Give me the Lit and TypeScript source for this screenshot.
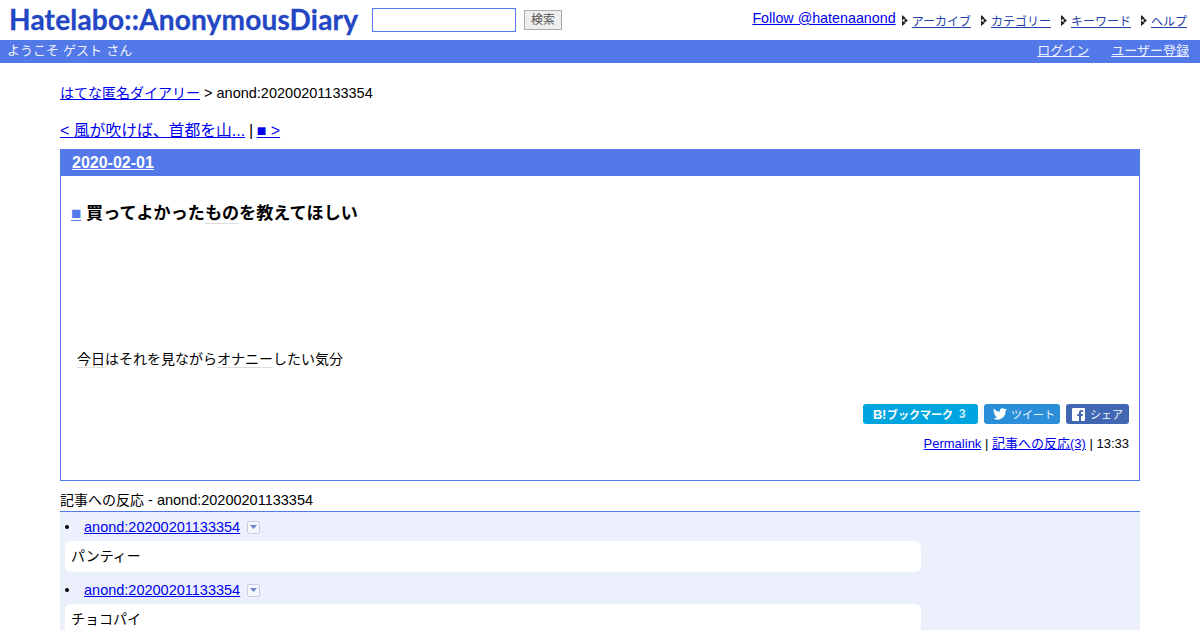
import { LitElement, html, css } from "lit";
import { customElement } from "lit/decorators.js";

const arrow = html`<svg class="arr" width="8" height="11" viewBox="0 0 8 11"><path d="M1 0 L4.500 2.800 L1 5.500Z M1 5.500 L4.500 8.200 L1 11Z M3.500 2.800 L7 5.500 L3.500 8.200Z" fill="#222"/></svg>`;
const caret = html`<span class="caret"><svg width="7" height="4" viewBox="0 0 7 4"><path d="M0 0H7L3.500 4Z" fill="#6f86c8"/></svg></span>`;

@customElement("app-root")
export class AppRoot extends LitElement {
  static styles = css`
    :host { display: block; height: 630px; overflow: hidden; background: #fff; color: #000;
      font-family: "Liberation Sans", "Noto Sans CJK JP", sans-serif; font-size: 14.5px; }
    a { color: #0000ee; }
    .ja { font-size: 14px; }
    .top { height: 40px; display: flex; align-items: flex-start; }
    .logo { margin: 2px 0 0 9px; width: 350px; font-size: 28px; line-height: 34px; font-weight: 700; color: #2346c4; white-space: nowrap; letter-spacing: 0.2px; -webkit-text-stroke: 0.3px #2346c4; font-family: "Lato", "Liberation Sans", sans-serif; }
    .q { box-sizing: border-box; margin: 8px 0 0 13px; width: 144px; height: 24px; border: 1px solid #5279e7; background: #fff; }
    .go { box-sizing: border-box; margin: 10px 0 0 8px; width: 38px; height: 20px; border: 1px solid #aaa; background: #eee; color: #555; font-size: 12px; line-height: 18px; text-align: center; }
    .nav { margin-left: auto; padding: 10px 13px 0 0; display: flex; align-items: center; height: 20px; white-space: nowrap; font-size: 13px; }
    .nav .f { font-size: 14.3px; margin: 0 5px 4px 0; }
    .nav .i { color: #1f40a5; font-size: 12px; margin-right: 9px; margin-left: 3px; }
    .nav .i:last-child { margin-right: 0; }
    .arr { flex: none; }
    .bar { height: 23px; background: #5279e7; color: #f0f3ff; display: flex; justify-content: space-between; padding: 0 11px 0 7px; font-size: 13px; line-height: 22px; word-spacing: 0.5px; }
    .bar a { color: #f0f3ff; margin-left: 22px; }
    main { padding: 0 60px; }
    .crumb { margin-top: 21px; line-height: 18px; }
    .pn { margin-top: 19px; line-height: 20px; font-size: 16px; }
    .pn .ja { font-size: 15.8px; }
    .sep { margin: 0 -1px 0 -0.5px; }
    .box { box-sizing: border-box; margin-top: 8px; height: 332px; border: 1px solid #5279e7; display: flex; flex-direction: column; }
    .date { height: 26px; background: #5279e7; padding-left: 11px; font-size: 16px; font-weight: 700; line-height: 26px; }
    .date a { color: #fff; }
    .h { margin: 27px 0 0 10px; font-size: 17.1px; font-weight: 700; line-height: 21px; }
    .h a { color: #5279e7; }
    .kw { border-bottom: 1px solid #ddd; }
    .text { margin: 125px 0 0 16px; line-height: 20px; font-size: 14px; }
    .share { display: flex; justify-content: flex-end; gap: 6px; margin: 35px 10px 0 0; }
    .btn { height: 20px; border-radius: 3px; color: #eef6fc; display: flex; align-items: center; gap: 4px; font-size: 11px; box-sizing: border-box; white-space: nowrap; }
    .hb { width: 115px; padding-left: 10px; gap: 0; background: #00a4de; color: #fff; font-weight: 700; }
    .hb b { font-size: 13px; width: 14px; letter-spacing: -0.5px; }
    .hb i { font-style: normal; font-weight: 700; font-size: 12px; margin-left: 6px; color: #cdeefa; }
    .tw { width: 76px; padding-left: 9px; background: #2a8fd8; }
    .fb { width: 63px; padding-left: 6px; gap: 5px; background: #4267b2; }
    .meta { margin: 11px 10px 0 0; text-align: right; font-size: 13px; line-height: 18px; }
    .rh { box-sizing: border-box; height: 31px; padding-top: 9px; line-height: 20px; border-bottom: 1px solid #5279e7; }
    .list { background: #ebf0fc; padding: 5px 0 0 5px; }
    .li { display: flex; align-items: center; height: 20px; }
    .dot { width: 4px; height: 4px; border-radius: 50%; background: #000; margin-right: 15px; flex: none; }
    .caret { box-sizing: border-box; width: 13px; height: 13px; border: 1px solid #c5d0e6; border-radius: 2px; background: #f5f7fd; display: inline-flex; align-items: center; justify-content: center; margin-left: 7px; }
    .card { width: 850px; height: 31px; background: #fff; border-radius: 6px; margin: 4px 0 8px; padding-left: 6px; line-height: 31px; font-size: 14px; }
  `;

  render() {
    return html`
      <div class="top">
        <div class="logo">Hatelabo::AnonymousDiary</div>
        <div class="q"></div>
        <div class="go">検索</div>
        <div class="nav">
          <a class="f" href="#">Follow @hatenaanond</a>
          ${arrow}<a class="i" href="#">アーカイブ</a>
          ${arrow}<a class="i" href="#">カテゴリー</a>
          ${arrow}<a class="i" href="#">キーワード</a>
          ${arrow}<a class="i" href="#">ヘルプ</a>
        </div>
      </div>
      <div class="bar">
        <span>ようこそ ゲスト さん</span>
        <span><a href="#">ログイン</a><a href="#">ユーザー登録</a></span>
      </div>
      <main>
        <div class="crumb"><a href="#"><span class="ja">はてな匿名ダイアリー</span></a> &gt; anond:20200201133354</div>
        <div class="pn"><a href="#">&lt; <span class="ja">風が吹けば、首都を山</span>...</a><span class="sep"> | </span><a href="#">■ &gt;</a></div>
        <div class="box">
          <div class="date"><a href="#">2020-02-01</a></div>
          <div class="h"><a href="#">■</a> 買ってよかった<span class="kw">もの</span>を教えてほしい</div>
          <div class="text"><span class="kw">今日</span>はそれを見ながら<span class="kw">オナニー</span>したい気分</div>
          <div class="share">
            <div class="btn hb"><b>B!</b>ブックマーク<i>3</i></div>
            <div class="btn tw"><svg width="14" height="12" viewBox="0 0 24 20"><path fill="#fff" d="M24 2.400a10 10 0 0 1-2.800.8A5 5 0 0 0 23.300.5a10 10 0 0 1-3.100 1.200 4.900 4.900 0 0 0-8.400 4.500A14 14 0 0 1 1.700.9a4.900 4.900 0 0 0 1.500 6.600 5 5 0 0 1-2.200-.6 4.900 4.900 0 0 0 3.900 4.900 5 5 0 0 1-2.200.1 4.900 4.900 0 0 0 4.600 3.400A10 10 0 0 1 0 17.300 14 14 0 0 0 21.500 4.900 10 10 0 0 0 24 2.400z"/></svg>ツイート</div>
            <div class="btn fb"><svg width="13" height="13" viewBox="0 0 13 13"><path fill="#fff" d="M1 0h11a1 1 0 0 1 1 1v11a1 1 0 0 1-1 1H9V8h1.700l.3-2H9V4.800c0-.6.300-1 1-1h1.100V2H9.500C7.700 2 7 3.100 7 4.600V6H5.300v2H7v5H1a1 1 0 0 1-1-1V1a1 1 0 0 1 1-1z"/></svg>シェア</div>
          </div>
          <div class="meta"><a href="#">Permalink</a> | <a href="#">記事への反応(3)</a> | 13:33</div>
        </div>
        <div class="rh"><span class="ja">記事への反応</span> - anond:20200201133354</div>
        <div class="list">
          <div class="li"><span class="dot"></span><a href="#">anond:20200201133354</a>${caret}</div>
          <div class="card">パンティー</div>
          <div class="li"><span class="dot"></span><a href="#">anond:20200201133354</a>${caret}</div>
          <div class="card">チョコパイ</div>
        </div>
      </main>
    `;
  }
}
